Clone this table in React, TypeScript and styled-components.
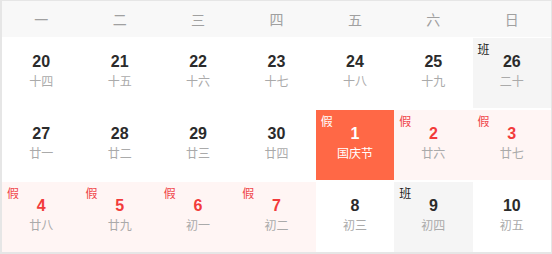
import React from "react";
import styled, { createGlobalStyle } from "styled-components";

const Global = createGlobalStyle`
  html, body { margin: 0; padding: 0; background: #fff; }
  body { font-family: "Liberation Sans", "Noto Sans CJK SC", sans-serif; }
  * { box-sizing: border-box; }
`;

type Kind = "normal" | "holiday" | "work" | "festival";

interface Day {
  d: number;
  lunar: string;
  kind: Kind;
}

const weeks: Day[][] = [
  [
    { d: 20, lunar: "十四", kind: "normal" },
    { d: 21, lunar: "十五", kind: "normal" },
    { d: 22, lunar: "十六", kind: "normal" },
    { d: 23, lunar: "十七", kind: "normal" },
    { d: 24, lunar: "十八", kind: "normal" },
    { d: 25, lunar: "十九", kind: "normal" },
    { d: 26, lunar: "二十", kind: "work" },
  ],
  [
    { d: 27, lunar: "廿一", kind: "normal" },
    { d: 28, lunar: "廿二", kind: "normal" },
    { d: 29, lunar: "廿三", kind: "normal" },
    { d: 30, lunar: "廿四", kind: "normal" },
    { d: 1, lunar: "国庆节", kind: "festival" },
    { d: 2, lunar: "廿六", kind: "holiday" },
    { d: 3, lunar: "廿七", kind: "holiday" },
  ],
  [
    { d: 4, lunar: "廿八", kind: "holiday" },
    { d: 5, lunar: "廿九", kind: "holiday" },
    { d: 6, lunar: "初一", kind: "holiday" },
    { d: 7, lunar: "初二", kind: "holiday" },
    { d: 8, lunar: "初三", kind: "normal" },
    { d: 9, lunar: "初四", kind: "work" },
    { d: 10, lunar: "初五", kind: "normal" },
  ],
];

const weekNames = ["一", "二", "三", "四", "五", "六", "日"];

const Frame = styled.div`
  width: 552px;
  height: 254px;
  border: 1px solid #e6e6e6;
  border-left-width: 2px;
  border-bottom-width: 2px;
  background: #fff;
  display: grid;
  grid-template-columns: repeat(7, 1fr);
  grid-template-rows: 35px 70px 70px 70px;
  row-gap: 2px;
`;

const HeadCell = styled.div`
  background: #f8f8f8;
  color: #a0a0a0;
  font-family: "Noto Sans CJK SC", sans-serif;
  font-size: 14px;
  display: flex;
  align-items: center;
  justify-content: center;
  margin-bottom: -1px;
`;

const bg: Record<Kind, string> = {
  normal: "#ffffff",
  holiday: "#fff5f4",
  work: "#f5f5f5",
  festival: "#ff6846",
};

const Cell = styled.div<{ $kind: Kind }>`
  position: relative;
  background: ${(p) => bg[p.$kind]};
  display: flex;
  flex-direction: column;
  align-items: center;
  padding-top: 14px;
`;

const Num = styled.div<{ $kind: Kind }>`
  font-family: "Liberation Sans", Arial, sans-serif;
  font-weight: bold;
  font-size: 16px;
  line-height: 20px;
  color: ${(p) =>
    p.$kind === "festival" ? "#fff" : p.$kind === "holiday" ? "#f23b3b" : "#2b2b2b"};
`;

const Lunar = styled.div<{ $kind: Kind }>`
  font-family: "Noto Sans CJK SC", sans-serif;
  font-size: 12px;
  line-height: 18px;
  color: ${(p) => (p.$kind === "festival" ? "#fff" : "#aaaaaa")};
`;

const Badge = styled.span<{ $kind: Kind }>`
  position: absolute;
  left: 5px;
  top: 3px;
  font-family: "Noto Sans CJK SC", sans-serif;
  font-size: 12px;
  line-height: 16px;
  color: ${(p) =>
    p.$kind === "festival" ? "#fff" : p.$kind === "work" ? "#222" : "#f0464a"};
`;

export default function App() {
  return (
    <>
      <Global />
      <Frame>
        {weekNames.map((w) => (
          <HeadCell key={w}>{w}</HeadCell>
        ))}
        {weeks.flat().map((day, i) => (
          <Cell key={i} $kind={day.kind}>
            {day.kind !== "normal" && (
              <Badge $kind={day.kind}>{day.kind === "work" ? "班" : "假"}</Badge>
            )}
            <Num $kind={day.kind}>{day.d}</Num>
            <Lunar $kind={day.kind}>{day.lunar}</Lunar>
          </Cell>
        ))}
      </Frame>
    </>
  );
}
